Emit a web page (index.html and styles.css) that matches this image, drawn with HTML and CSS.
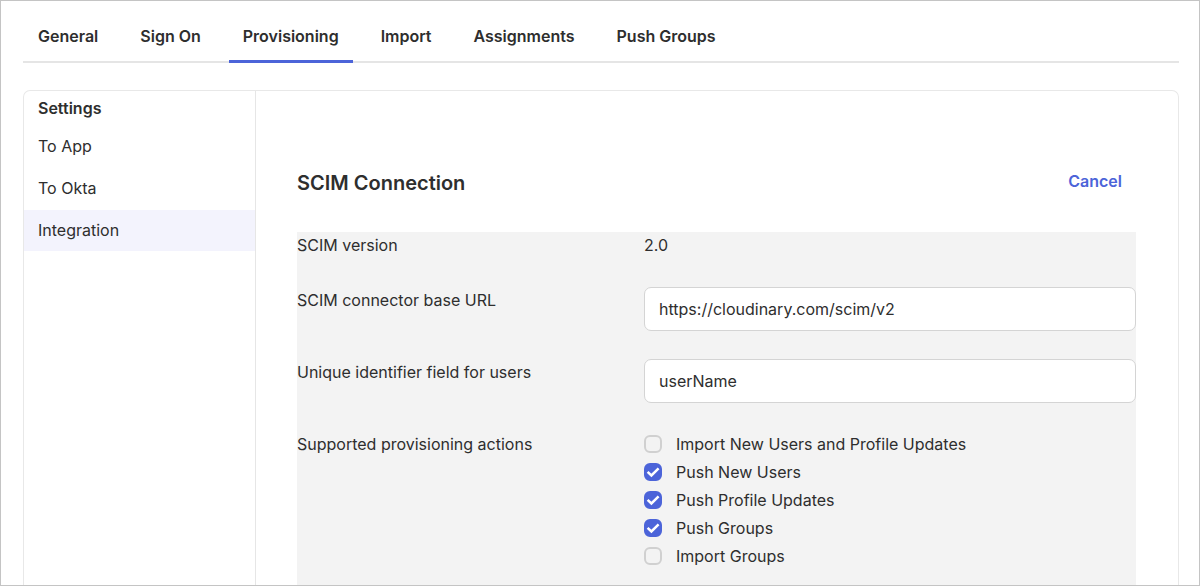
FILE: index.html
```html
<!DOCTYPE html>
<html lang="en">
<head>
<meta charset="utf-8">
<title>Provisioning</title>
<link rel="stylesheet" href="styles.css">
</head>
<body>
<div class="page">
  <nav class="tabs" aria-label="Application">
    <a class="tab" href="#general">General</a>
    <a class="tab" href="#sign-on">Sign On</a>
    <a class="tab tab-active" href="#provisioning" aria-current="page">Provisioning</a>
    <a class="tab" href="#import">Import</a>
    <a class="tab" href="#assignments">Assignments</a>
    <a class="tab" href="#push-groups">Push Groups</a>
  </nav>
  <div class="panel">
    <aside class="sidebar">
      <h2 class="sidebar-title">Settings</h2>
      <nav class="sidebar-nav" aria-label="Settings">
        <a class="side-link" href="#to-app">To App</a>
        <a class="side-link" href="#to-okta">To Okta</a>
        <a class="side-link side-link-active" href="#integration" aria-current="page">Integration</a>
      </nav>
    </aside>
    <main class="content">
      <header class="content-head">
        <h1 class="title">SCIM Connection</h1>
        <button class="cancel" type="button">Cancel</button>
      </header>
      <form class="form">
        <div class="row">
          <span class="label">SCIM version</span>
          <span class="value">2.0</span>
        </div>
        <div class="row">
          <label class="label" for="base-url">SCIM connector base URL</label>
          <input class="field" id="base-url" type="text" value="https://cloudinary.com/scim/v2">
        </div>
        <div class="row">
          <label class="label" for="unique-id">Unique identifier field for users</label>
          <input class="field" id="unique-id" type="text" value="userName">
        </div>
        <div class="row" role="group" aria-labelledby="actions-label">
          <span class="label" id="actions-label">Supported provisioning actions</span>
          <div class="checks">
            <label class="check"><input class="box" type="checkbox">Import New Users and Profile Updates</label>
            <label class="check"><input class="box" type="checkbox" checked>Push New Users</label>
            <label class="check"><input class="box" type="checkbox" checked>Push Profile Updates</label>
            <label class="check"><input class="box" type="checkbox" checked>Push Groups</label>
            <label class="check"><input class="box" type="checkbox">Import Groups</label>
          </div>
        </div>
      </form>
    </main>
  </div>
</div>
</body>
</html>
```
FILE: styles.css
```css
* {
  box-sizing: border-box;
}

body {
  margin: 0;
  font-family: Inter, "Liberation Sans", sans-serif;
  font-size: 16px;
  line-height: 26px;
  color: #2e2e2e;
  background: #fff;
}

.page {
  display: flex;
  flex-direction: column;
  min-height: 100vh;
  padding: 12px 20px 0 22px;
  border: 1px solid #c4c4c4;
}

.tabs {
  display: flex;
  gap: 14px;
  margin-bottom: 27px;
  padding-left: 1px;
  box-shadow: inset 0 -2px #e5e5e5;
}

.tab {
  padding: 10px 14px 11px;
  border-bottom: 3px solid transparent;
  font-weight: 600;
  color: inherit;
  text-decoration: none;
}

.tab-active {
  border-bottom-color: #4c64d9;
}

.panel {
  display: flex;
  flex: 1;
  border: 1px solid #e8e8e8;
  border-bottom: 0;
  border-radius: 7px 7px 0 0;
}

.sidebar {
  width: 232px;
  border-right: 1px solid #e6e6e6;
}

.sidebar-title {
  margin: 0;
  padding: 4px 14px 5px;
  font-size: 16px;
  font-weight: 600;
}

.sidebar-nav {
  display: flex;
  flex-direction: column;
  gap: 1px;
}

.side-link {
  padding: 7px 14px 8px;
  color: inherit;
  text-decoration: none;
}

.side-link-active {
  background: #f3f3fd;
}

.content {
  display: flex;
  flex: 1;
  flex-direction: column;
  padding: 75px 42px 0 41px;
}

.content-head {
  display: flex;
  align-items: center;
  justify-content: space-between;
  margin-bottom: 32px;
}

.title {
  margin: 0;
  font-size: 20px;
  font-weight: 600;
  line-height: 34px;
}

.cancel {
  padding: 0 14px 4px;
  border: 0;
  background: none;
  font: inherit;
  font-weight: 600;
  color: #4c64d9;
  cursor: pointer;
}

.form {
  display: flex;
  flex: 1;
  flex-direction: column;
  gap: 28px;
  padding-bottom: 16px;
  background: #f3f3f3;
}

.row {
  display: grid;
  grid-template-columns: 347fr 492fr;
  align-items: start;
  min-height: 27px;
}

.field {
  width: 100%;
  height: 44px;
  padding: 0 14px;
  border: 1px solid #d4d4d4;
  border-radius: 7px;
  background: #fff;
  font: inherit;
  color: inherit;
}

.checks {
  display: flex;
  flex-direction: column;
  gap: 2px;
}

.check {
  display: flex;
  align-items: center;
  gap: 14px;
}

.box {
  appearance: none;
  width: 18px;
  height: 18px;
  margin: 0;
  border: 2px solid #d0d0d0;
  border-radius: 6px;
}

.box:checked {
  border-color: #4c64d9;
  background: #4c64d9 url("data:image/svg+xml,%3Csvg xmlns='http://www.w3.org/2000/svg' viewBox='0 0 18 18'%3E%3Cpath d='M3.6 8.8L7.4 12.4L14.6 5.4' fill='none' stroke='white' stroke-width='2.5'/%3E%3C/svg%3E") center / 18px 18px border-box;
}
```
